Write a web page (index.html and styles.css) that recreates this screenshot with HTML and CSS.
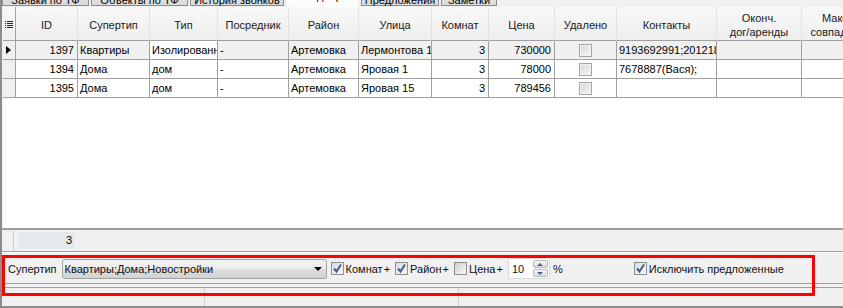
FILE: index.html
```html
<!DOCTYPE html>
<html lang="ru">
<head>
<meta charset="utf-8">
<link rel="stylesheet" href="styles.css">
</head>
<body>
<div class="window">
  <div class="tabs">
    <div class="tab w1">Заявки по ТФ</div>
    <div class="tab w2">Объекты по ТФ</div>
    <div class="tab w3">История звонков</div>
    <div class="tab active w4">Подбор</div>
    <div class="tab w5">Предложения</div>
    <div class="tab w6">Заметки</div>
  </div>

  <div class="grid">
    <div class="hc ind"><svg width="8" height="8" viewBox="0 0 8 8"><g fill="#222"><rect x="0" y="0" width="1" height="1"/><rect x="2" y="0" width="6" height="1"/><rect x="0" y="2" width="1" height="1"/><rect x="2" y="2" width="6" height="1"/><rect x="0" y="4" width="1" height="1"/><rect x="2" y="4" width="6" height="1"/><rect x="0" y="6" width="1" height="1"/><rect x="2" y="6" width="6" height="1"/></g></svg></div>
    <div class="hc">ID</div>
    <div class="hc">Супертип</div>
    <div class="hc">Тип</div>
    <div class="hc">Посредник</div>
    <div class="hc">Район</div>
    <div class="hc">Улица</div>
    <div class="hc">Комнат</div>
    <div class="hc">Цена</div>
    <div class="hc">Удалено</div>
    <div class="hc">Контакты</div>
    <div class="hc two">Оконч.<br>дог/аренды</div>
    <div class="hc two">Макс.<br>совпад. %</div>

    <div class="c ind cur"><span class="arrow"></span></div>
    <div class="c num sel">1397</div>
    <div class="c sel">Квартиры</div>
    <div class="c focus">Изолированн</div>
    <div class="c sel">-</div>
    <div class="c sel">Артемовка</div>
    <div class="c sel">Лермонтова 1</div>
    <div class="c num sel">3</div>
    <div class="c num sel">730000</div>
    <div class="c mid sel"><span class="cb"></span></div>
    <div class="c sel">9193692991;201218</div>
    <div class="c sel"></div>
    <div class="c sel"></div>

    <div class="c ind"></div>
    <div class="c num">1394</div>
    <div class="c">Дома</div>
    <div class="c">дом</div>
    <div class="c">-</div>
    <div class="c">Артемовка</div>
    <div class="c">Яровая 1</div>
    <div class="c num">3</div>
    <div class="c num">78000</div>
    <div class="c mid"><span class="cb"></span></div>
    <div class="c">7678887(Вася);</div>
    <div class="c"></div>
    <div class="c"></div>

    <div class="c ind"></div>
    <div class="c num">1395</div>
    <div class="c">Дома</div>
    <div class="c">дом</div>
    <div class="c">-</div>
    <div class="c">Артемовка</div>
    <div class="c">Яровая 15</div>
    <div class="c num">3</div>
    <div class="c num">789456</div>
    <div class="c mid"><span class="cb"></span></div>
    <div class="c"></div>
    <div class="c"></div>
    <div class="c"></div>
  </div>

  <div class="footer">
    <div class="f-gap"></div>
    <div class="f-cell">3</div>
  </div>

  <div class="filter">
    <span class="lbl">Супертип</span>
    <div class="combo"><span>Квартиры;Дома;Новостройки</span><span class="drop"></span></div>
    <label class="chk"><span class="box on"><svg width="11" height="11" viewBox="0 0 11 11"><path d="M2 5.5 L4.5 8.5 L9 1.5" fill="none" stroke="#4a5d8c" stroke-width="2"/></svg></span>Комнат +</label>
    <label class="chk"><span class="box on"><svg width="11" height="11" viewBox="0 0 11 11"><path d="M2 5.5 L4.5 8.5 L9 1.5" fill="none" stroke="#4a5d8c" stroke-width="2"/></svg></span>Район +</label>
    <label class="chk"><span class="box"></span>Цена +</label>
    <div class="spin"><span class="val">10</span><div class="btns"><span class="sb up"></span><span class="sb down"></span></div></div>
    <span class="pct">%</span>
    <label class="chk excl"><span class="box on"><svg width="11" height="11" viewBox="0 0 11 11"><path d="M2 5.5 L4.5 8.5 L9 1.5" fill="none" stroke="#4a5d8c" stroke-width="2"/></svg></span>Исключить предложенные</label>
  </div>

  <div class="status">
    <div class="s1"></div>
    <div class="s2"></div>
    <div class="s3"></div>
  </div>

  <div class="highlight"></div>
</div>
</body>
</html>
```

FILE: styles.css
```css
* { box-sizing: border-box; }

body {
  margin: 0;
  width: 843px;
  height: 308px;
  overflow: hidden;
  background: #f0f0f0;
  font: 11px "Liberation Sans", Arial, sans-serif;
  color: #000;
}

.window {
  position: relative;
  height: 308px;
  border-left: 2px solid #8c8c8c;
  border-bottom: 2px solid #8c8c8c;
  display: flex;
  flex-direction: column;
}

/* tabs (cut at top) */
.tabs {
  height: 7px;
  flex: none;
  display: flex;
  align-items: flex-end;
  gap: 2px;
  padding-bottom: 1px;
  overflow: hidden;
}
.tab {
  flex: none;
  height: 20px;
  border: 1px solid #8c8c8c;
  background: linear-gradient(#ececec, #dadada);
  display: flex;
  align-items: flex-end;
  justify-content: center;
  line-height: 10px;
  white-space: nowrap;
  color: #000;
}
.tab.active {
  height: 22px;
  margin: 0 1px -1px 1px;
  background: #fcfcfc;
  border: none;
  padding-bottom: 6px;
}
.w1 { width: 87px; }
.w2 { width: 97px; }
.w3 { width: 94px; }
.w4 { width: 71px; }
.w5 { width: 78px; }
.w6 { width: 56px; }

/* grid */
.grid {
  flex: none;
  height: 221px;
  margin-left: 1px;
  background: #fff;
  overflow: hidden;
  display: grid;
  grid-template-columns: 13px 62px 72px 68px 71px 70px 73px 57px 66px 62px 100px 85px 70px;
  grid-auto-rows: 19px;
  grid-template-rows: 34px;
  align-content: start;
}
.hc {
  background: linear-gradient(#f8f8f8, #eeeeee);
  border-bottom: 1px solid #a0a0a0;
  border-right: 1px solid #e2e2e2;
  display: flex;
  align-items: center;
  justify-content: center;
  text-align: center;
  line-height: 14px;
  padding-top: 2px;
  color: #1a1a1a;
  white-space: nowrap;
}
.hc.ind {
  border-right: 1px solid #a0a0a0;
  justify-content: flex-start;
  padding-left: 2px;
}
.c {
  border-right: 1px solid #a0a0a0;
  border-bottom: 1px solid #a0a0a0;
  padding: 0 2px;
  display: flex;
  align-items: center;
  white-space: nowrap;
  overflow: hidden;
  line-height: 18px;
}
.c.num { justify-content: flex-end; padding-right: 3px; }
.c.mid { justify-content: center; }
.c.sel { background: #f0f0f0; }
.c.focus { background: #fff; }
.c.ind { background: #f0f0f0; padding: 0 0 0 3px; }
.arrow {
  width: 0;
  height: 0;
  border-top: 4px solid transparent;
  border-bottom: 4px solid transparent;
  border-left: 5px solid #000;
}
.cb {
  width: 13px;
  height: 13px;
  border: 1px solid #a5a5a5;
  background: linear-gradient(135deg, #d6d6d6, #f6f6f6);
  box-shadow: inset 0 0 0 1px #f2f2f2;
}

/* footer summary row */
.footer {
  flex: none;
  height: 24px;
  border-top: 2px solid #9c9c9c;
  border-bottom: 1px solid #a0a0a0;
  display: flex;
  align-items: center;
  padding-left: 11px;
}
.f-gap {
  width: 1px;
  align-self: stretch;
  background: #cfcfcf;
  margin-right: 3px;
}
.f-cell {
  width: 59px;
  height: 19px;
  background: #e5e9eb;
  border: 1px solid #f4f4f4;
  text-align: right;
  padding-right: 3px;
  line-height: 17px;
}

/* filter panel */
.filter {
  flex: none;
  height: 32px;
  border-top: 1px solid #fff;
  border-bottom: 1px solid #a0a0a0;
  display: flex;
  align-items: center;
  padding: 1px 0 0 6px;
  white-space: nowrap;
  color: #111;
}
.lbl { margin-right: 5px; }
.combo {
  width: 265px;
  height: 20px;
  border: 1px solid #a2a2a2;
  border-radius: 3px;
  background: linear-gradient(#f3f3f3 0%, #ebebeb 50%, #dddddd 51%, #d3d3d3 100%);
  display: flex;
  align-items: center;
  justify-content: space-between;
  padding: 0 4px 0 2px;
  margin-right: 4px;
}
.drop {
  width: 0;
  height: 0;
  border-left: 4px solid transparent;
  border-right: 4px solid transparent;
  border-top: 4px solid #000;
}
.chk {
  display: flex;
  align-items: center;
  margin-right: 5px;
  word-spacing: -2px;
}
.box {
  width: 13px;
  height: 13px;
  border: 1px solid #8e8f8f;
  background: linear-gradient(135deg, #cfcfcf, #f7f7f7);
  margin-right: 2px;
  display: flex;
  align-items: center;
  justify-content: center;
}
.box.on { background: linear-gradient(135deg, #d8dde6, #f7f7f7); }
.spin {
  width: 42px;
  height: 21px;
  border: 1px solid #d9d9d9;
  background: #fff;
  display: flex;
  align-items: center;
  justify-content: space-between;
  padding: 0 1px 0 3px;
  margin-right: 3px;
}
.btns {
  display: flex;
  flex-direction: column;
  gap: 1px;
}
.sb {
  width: 15px;
  height: 8px;
  border: 1px solid #b9b9b9;
  border-radius: 2px;
  background: linear-gradient(#f4f4f4, #dcdcdc);
  display: flex;
  align-items: center;
  justify-content: center;
}
.sb::after {
  content: "";
  border-left: 3px solid transparent;
  border-right: 3px solid transparent;
}
.sb.up::after { border-bottom: 3px solid #4d5f8a; }
.sb.down::after { border-top: 3px solid #4d5f8a; }
.pct { margin-right: 71px; }
.excl { margin-right: 0; word-spacing: 0; }

/* status bar */
.status {
  flex: none;
  height: 19px;
  margin-top: 3px;
  border-top: 1px solid #a0a0a0;
  display: flex;
}
.s1 { width: 203px; border-right: 1px solid #d2d2d2; }
.s2 { width: 254px; border-right: 1px solid #d2d2d2; }
.s3 { flex: 1; }

/* red annotation frame */
.highlight {
  position: absolute;
  left: 0;
  top: 255px;
  width: 813px;
  height: 41px;
  border: 3px solid #ff0000;
  pointer-events: none;
}
```
